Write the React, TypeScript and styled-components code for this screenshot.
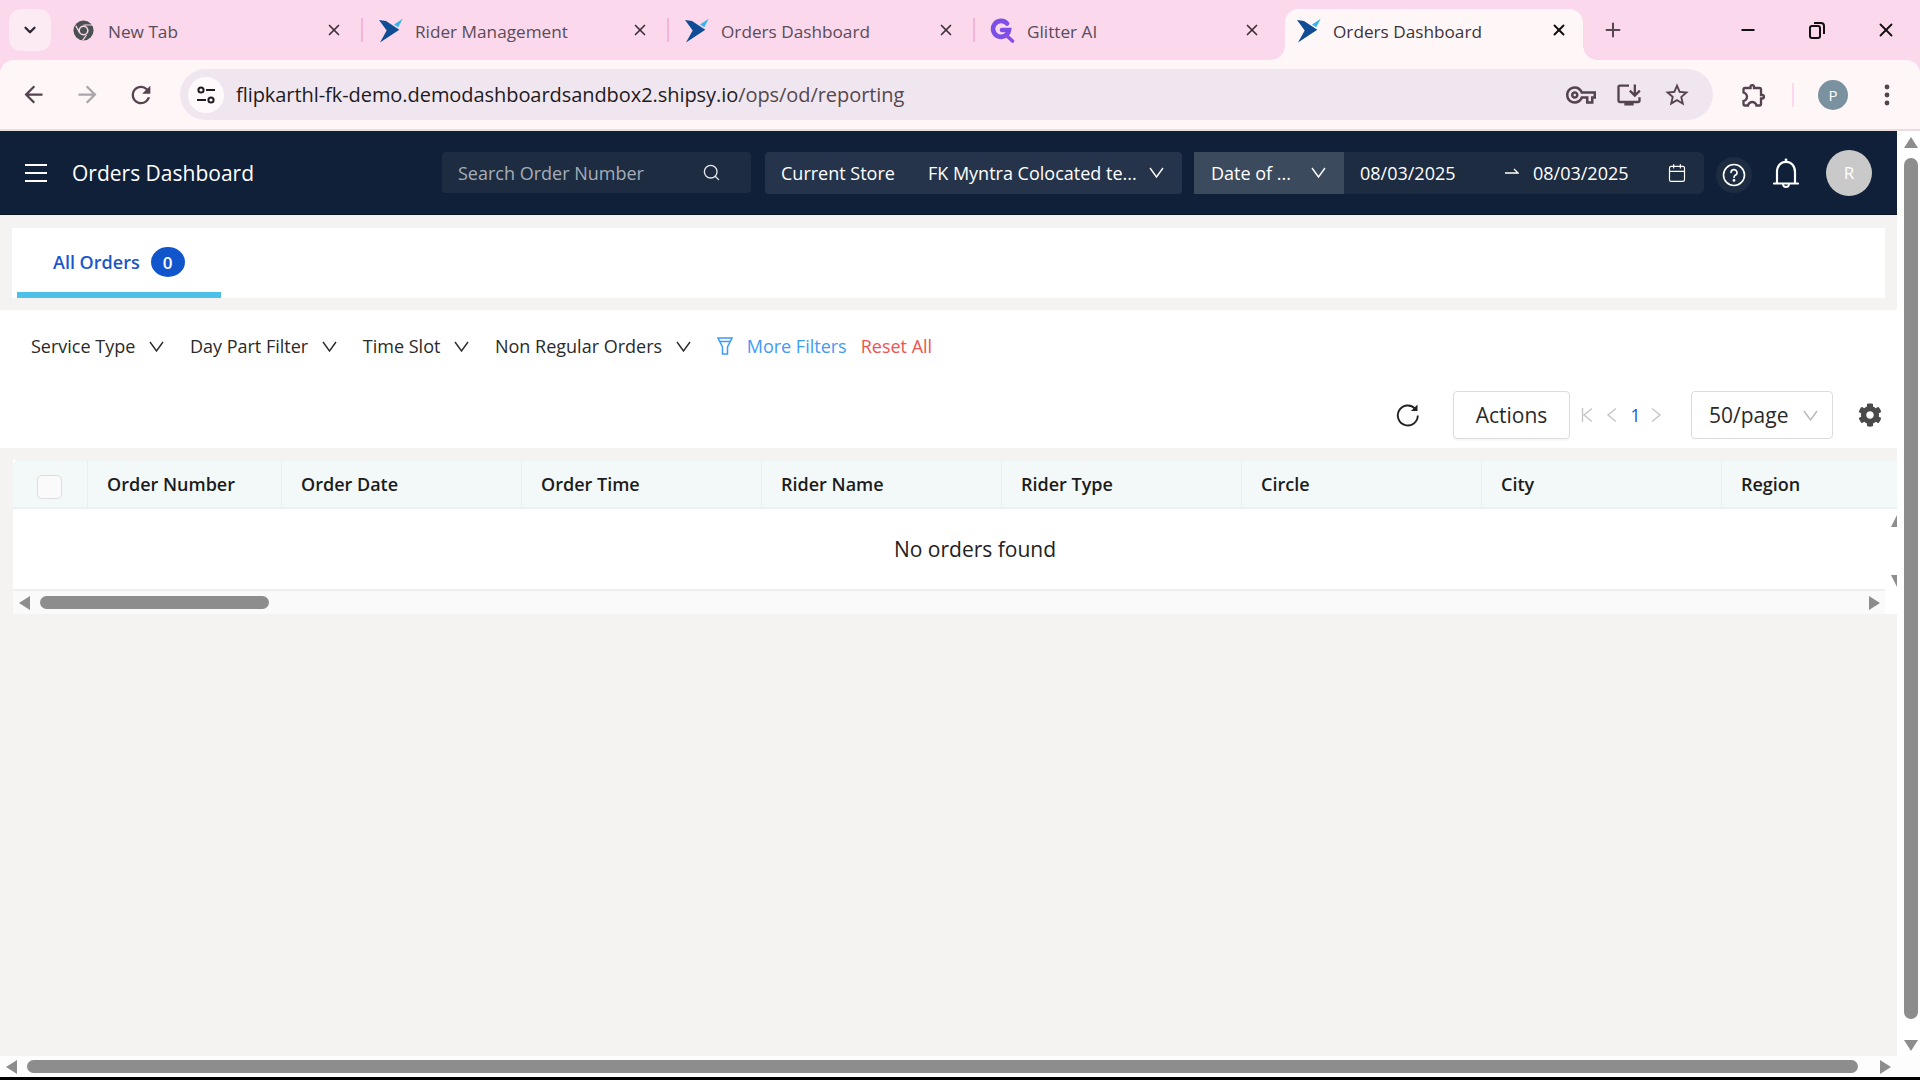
import React from "react";
import styled, { createGlobalStyle } from "styled-components";
import { Minus, Plus, X, Search, ChevronDown, Calendar } from "lucide-react";
import { FaCog } from "react-icons/fa";
import {
  MdArrowBack, MdArrowForward, MdRefresh, MdOutlineVpnKey, MdOutlineInstallDesktop, MdStarBorder, MdOutlineExtension,
} from "react-icons/md";

const Global = createGlobalStyle`
  html, body { margin: 0; padding: 0; height: 100%; overflow: hidden; background: #f4f3f1; }
  * { box-sizing: border-box; }
  body { font-family: "Open Sans", "Noto Sans", sans-serif; }
`;

const Page = styled.div`
  width: 1920px; height: 1080px; display: flex; flex-direction: column; overflow: hidden; background: #fbd8eb;
`;

/* Chrome tab strip */
const TabStrip = styled.div`
  height: 60px; background: #fbd8eb; display: flex; align-items: flex-end; padding-left: 9px; flex: none;
`;
const TabMenu = styled.div`
  width: 42px; height: 42px; margin-bottom: 9px; border-radius: 12px; background: #fdebf4; color: #2b2430;
  display: flex; align-items: center; justify-content: center; flex: none; margin-right: 6px;
`;
const Tab = styled.div<{ $active?: boolean; $sep?: boolean }>`
  width: ${(p) => (p.$active ? "298px" : "306px")};
  height: 51px;
  margin-left: ${(p) => (p.$active ? "4px" : "0")};
  padding: 0 ${(p) => (p.$active ? "9px" : "14px")} 9px ${(p) => (p.$active ? "11px" : "15px")};
  background: ${(p) => (p.$active ? "#fff7f7" : "transparent")};
  border-radius: ${(p) => (p.$active ? "14px 14px 0 0" : "0")};
  display: flex; align-items: center; gap: 12px; flex: none; position: relative;
  font-size: 17.2px; color: ${(p) => (p.$active ? "#3d3340" : "#5a4c58")};
  &::after {
    content: ""; display: ${(p) => (p.$sep ? "block" : "none")};
    position: absolute; right: 0; top: 9px; width: 2px; height: 24px; background: #f5b5d8;
  }
`;
const FirstTab = styled(Tab)`
  padding-left: 16px;
`;
const ActiveTabFlare = styled.span<{ $side: "left" | "right" }>`
  position: absolute; bottom: 0; width: 14px; height: 14px;
  ${(p) => (p.$side === "left" ? "left: -14px;" : "right: -14px;")}
  background: radial-gradient(circle at ${(p) => (p.$side === "left" ? "0 0" : "100% 0")}, transparent 13.5px, #fff7f7 14px);
`;
const Favicon = styled.svg`
  width: 25px; height: 25px; flex: none;
`;
const ChromeFavicon = styled.svg`
  width: 21px; height: 21px; flex: none; margin-right: 2px;
`;
const TabTitle = styled.span`
  flex: 1; white-space: nowrap; overflow: hidden; padding-top: 2px;
`;
const TabClose = styled.span`
  width: 22px; display: flex; justify-content: center; margin-right: 4px; color: #3b3038;
`;
const NewTab = styled.div`
  width: 30px; height: 42px; margin: 0 0 9px 15px; display: flex; align-items: center; justify-content: center; color: #55464f;
`;
const WindowControls = styled.div`
  margin-left: auto; height: 60px; display: flex; align-items: center; color: #111;
`;
const WindowButton = styled.div`
  width: 69px; display: flex; justify-content: center;
`;

/* Chrome toolbar */
const Toolbar = styled.div`
  height: 71px; flex: none; background: #fff7f7; border-bottom: 2px solid #e9dfe0; border-radius: 14px 14px 0 0;
  display: flex; align-items: center; color: #55434f;
`;
const NavIcon = styled.div<{ $dim?: boolean }>`
  width: 54px; display: flex; justify-content: center; color: ${(p) => (p.$dim ? "#aca4a8" : "#55434f")}; flex: none;
`;
const NavGroup = styled.div`
  display: flex; padding-left: 6px; margin-right: 12px;
`;
const Omnibox = styled.div`
  width: 1533px; height: 51px; border-radius: 26px; background: #f0e6f0; display: flex; align-items: center;
  padding: 0 12px 0 8px; flex: none;
`;
const SiteChip = styled.div`
  width: 36px; height: 36px; border-radius: 50%; background: #fff9fb; display: flex; align-items: center; justify-content: center; flex: none;
`;
const Url = styled.div`
  margin-left: 12px; font-size: 20px; color: #1f1a20; white-space: nowrap; letter-spacing: -0.06px;
`;
const UrlPath = styled.span`
  color: #55484f;
`;
const OmniIcons = styled.div`
  margin-left: auto; display: flex; color: #55434f; align-items: center;
`;
const OmniSlot = styled.div`
  width: 48px; display: flex; justify-content: center;
`;
const ToolRight = styled.div`
  display: flex; align-items: center; color: #55434f; flex: 1; padding-left: 27px;
`;
const ToolDivider = styled.div`
  width: 2px; height: 24px; background: #fbd8eb; margin: 0 24px;
`;
const ProfileDot = styled.div`
  width: 30px; height: 30px; border-radius: 50%; background: #7a919f; color: #fff; font-size: 15px;
  display: flex; align-items: center; justify-content: center; flex: none;
`;
const MoreDots = styled.svg`
  width: 6px; height: 22px; margin-left: 36px; flex: none;
`;

/* Viewport */
const Viewport = styled.div`
  flex: 1; display: flex; min-height: 0;
`;
const Content = styled.div`
  flex: 1; min-width: 0; background: #f4f3f1; display: flex; flex-direction: column;
`;
const VScroll = styled.div`
  width: 23px; flex: none; background: #fff; display: flex; flex-direction: column; align-items: center; padding: 6px 1px 5px 5px;
`;
const VThumb = styled.div`
  width: 14px; flex: 1; margin: 10px 0 21px; border-radius: 7px; background: #8d8d8d;
`;
const ArrowUp = styled.div`
  width: 0; height: 0; border-left: 7.5px solid transparent; border-right: 7.5px solid transparent; border-bottom: 11px solid #8d8d8d; flex: none;
`;
const ArrowDown = styled.div`
  width: 0; height: 0; border-left: 7.5px solid transparent; border-right: 7.5px solid transparent; border-top: 11px solid #8d8d8d; flex: none;
`;
const ArrowL = styled.div`
  width: 0; height: 0; border-top: 7.5px solid transparent; border-bottom: 7.5px solid transparent; border-right: 11px solid #8d8d8d; flex: none;
`;
const ArrowR = styled.div`
  width: 0; height: 0; border-top: 7.5px solid transparent; border-bottom: 7.5px solid transparent; border-left: 11px solid #8d8d8d; flex: none;
`;
const HScroll = styled.div`
  height: 21px; flex: none; background: #fdfdfd; display: flex; align-items: center; padding: 0 29px 0 6px;
`;
const HThumb = styled.div`
  flex: 1; height: 13px; border-radius: 7px; background: #8d8d8d; margin: 0 22px 0 10px;
`;
const BottomEdge = styled.div`
  height: 3px; background: #000; flex: none;
`;

/* App header */
const AppHeader = styled.header`
  height: 84px; flex: none; background: #0f2038; color: #fff; display: flex; align-items: center; padding: 0 0 1px 25px;
  box-shadow: inset 0 -1px 0 #0a1320;
`;
const HeaderTitle = styled.div`
  font-size: 21px; margin-left: 25px; width: 370px; white-space: nowrap; flex: none;
`;
const SearchBox = styled.div`
  width: 309px; height: 41px; background: #1e2c42; border-radius: 4px; display: flex; align-items: center; padding: 0 30px 0 16px;
  color: #a6adb8; font-size: 18px; flex: none; justify-content: space-between;
`;
const StoreSelect = styled.div`
  width: 417px; height: 42px; margin-left: 14px; background: #25344a; border-radius: 4px; display: flex; align-items: center;
  padding: 0 18px 0 16px; font-size: 18px; flex: none; white-space: nowrap;
`;
const StoreValue = styled.span`
  margin-left: 33px; flex: 1;
`;
const DateType = styled.div`
  width: 150px; height: 42px; margin-left: 12px; background: #3c4a5d; display: flex; align-items: center; justify-content: space-between;
  padding: 0 18px 0 17px; font-size: 18px; flex: none; white-space: nowrap;
`;
const DateRange = styled.div`
  width: 360px; height: 42px; background: #1e2c42; border-radius: 0 6px 6px 0; display: flex; align-items: center; padding: 0 17px 0 16px;
  font-size: 18px; flex: none;
`;
const DateText = styled.span`
  width: 145px;
`;
const DateSecond = styled.span`
  flex: 1;
`;
const RangeArrow = styled.svg`
  width: 14px; height: 10px; margin: 0 14px 4px 0; flex: none;
`;
const HelpBubble = styled.div`
  width: 36px; height: 36px; margin: 5px 0 0 12px; border-radius: 50%; background: #1e2c42; display: flex; align-items: center; justify-content: center; flex: none;
`;
const BellWrap = styled.div`
  margin: 2px 0 0 17px; display: flex; flex: none; width: 34px; justify-content: center;
`;
const UserAvatar = styled.div`
  width: 46px; height: 46px; border-radius: 50%; background: #c9c9c9; margin-left: 23px; display: flex; align-items: center; justify-content: center;
  color: #fff; font-size: 17px; flex: none;
`;

/* Tabs card */
const TabsCard = styled.div`
  height: 70px; margin: 13px 12px 0 12px; background: #fff; display: flex; flex: none;
`;
const OrdersTab = styled.div`
  width: 204px; height: 70px; margin-left: 5px; border-bottom: 6px solid #4cc0e6; display: flex; align-items: center; padding: 4px 0 0 36px; gap: 11px;
  color: #1a56cc; font-size: 18px; font-weight: 600;
`;
const CountBadge = styled.span`
  width: 34px; height: 30px; border-radius: 50%; background: #1155cc; color: #fff; display: flex; align-items: center; justify-content: center; font-size: 17px; font-weight: 600;
`;

/* Filters card */
const FiltersCard = styled.div`
  height: 138px; margin-top: 12px; background: #fff; display: flex; flex-direction: column; padding-top: 18px; flex: none;
`;
const FilterRow = styled.div`
  height: 36px; display: flex; align-items: center; padding-left: 31px; font-size: 18px; color: #2a2a2a;
`;
const FilterItem = styled.div`
  display: flex; align-items: center; gap: 14px; margin-right: 25.6px; white-space: nowrap;
`;
const MoreFilters = styled.div`
  display: flex; align-items: center; gap: 14px; color: #3f9bf5; white-space: nowrap;
`;
const FunnelIcon = styled.svg`
  width: 16px; height: 18px; flex: none;
`;
const ResetAll = styled.div`
  color: #f05353; margin-left: 14px; white-space: nowrap;
`;
const ActionRow = styled.div`
  height: 48px; margin-top: 27px; display: flex; align-items: center; justify-content: flex-end; padding-right: 15px;
`;
const ActionsButton = styled.div`
  width: 117px; height: 48px; border: 1px solid #dcdcdc; border-radius: 4px; box-shadow: 0 2px 0 rgba(0,0,0,0.03); display: flex; align-items: center; justify-content: center;
  font-size: 21px; color: #2a2a2a; margin-left: 33px;
`;
const Pager = styled.div`
  display: flex; align-items: center; width: 121px; padding-left: 11px; flex: none; color: #c5c5c5;
`;
const PagerSlot = styled.svg`
  width: 12px; height: 16px; margin-right: 13px; flex: none;
`;
const PageNumber = styled.span`
  color: #1a56cc; font-size: 17.5px; width: 11px; margin: 0 9px 0 -1px; text-align: center;
`;
const PageSize = styled.div`
  width: 142px; height: 48px; border: 1px solid #dcdcdc; border-radius: 4px; display: flex; align-items: center; justify-content: space-between; padding: 0 14px 0 17px;
  font-size: 21px; color: #2a2a2a;
`;
const GearWrap = styled.div`
  margin-left: 25px; display: flex; color: #4a4a4a;
`;

/* Table */
const TableWrap = styled.div`
  margin: 12px 0 0 13px; background: #fff; display: flex; flex-direction: column; flex: none; position: relative;
`;
const HeadRow = styled.div`
  height: 49px; display: flex; background: #f3f8f8; border-bottom: 2px solid #ebf0f0; border-top: 1px solid #eef3f3; border-radius: 6px 0 0 0; overflow: hidden;
`;
const CheckCell = styled.div`
  width: 75px; flex: none; border-right: 1px solid #e9eeee; display: flex; align-items: center; justify-content: center;
`;
const CheckBox = styled.div`
  width: 25px; height: 24px; border: 1.5px solid #dcdcdc; border-radius: 5px; background: #fafafa; margin: 6px 1px 0 0;
`;
const HeadCell = styled.div<{ $w: number }>`
  width: ${(p) => p.$w}px; flex: none; padding-left: 19px; border-right: 1px solid #eaefef; display: flex; align-items: center;
  font-size: 18px; font-weight: 600; color: #1c1c1c; white-space: nowrap;
  &:last-child { border-right: 0; }
`;
const EmptyRow = styled.div`
  height: 82px; display: flex; align-items: center; justify-content: center; border-bottom: 2px solid #eeeeee; padding-left: 52px; margin-right: 12px;
  font-size: 21px; color: #222;
`;
const SmallArrowUp = styled.div`
  position: absolute; right: 0; top: 55px; width: 0; height: 0; border-left: 6px solid transparent; border-bottom: 12px solid #8d8d8d;
`;
const SmallArrowDown = styled.div`
  position: absolute; right: 0; top: 115px; width: 0; height: 0; border-left: 6px solid transparent; border-top: 12px solid #8d8d8d;
`;
const TableScroll = styled.div`
  height: 23px; background: #fafafa; margin-right: 12px; display: flex; align-items: center; padding: 0 5px 0 6px;
`;
const TableThumb = styled.div`
  width: 229px; height: 13px; border-radius: 7px; background: #8d8d8d; margin-left: 10px;
`;
const TableSpacer = styled.div`
  flex: 1;
`;

const ShipsyLogo = () => (
  <Favicon viewBox="0 0 25 25">
    <path d="M1 2 L8 3 L21.3 11.8 L2 24.5 L8.7 12.5 Z" fill="#0f4c96" />
    <path d="M16 6.5 L24.7 0.8 L20.3 9.3 Z" fill="#35b6ea" />
  </Favicon>
);

const ChromeLogo = () => (
  <ChromeFavicon viewBox="0 0 24 24">
    <circle cx="12" cy="12" r="11.5" fill="#4b5052" />
    <circle cx="12" cy="12" r="5.8" fill="#fbd8eb" />
    <circle cx="12" cy="12" r="4" fill="#4b5052" />
    <path d="M12 6.4 L22 6.4 L21.5 5 L12 5 Z" fill="#fbd8eb" />
    <path d="M7 14.8 L2.6 7 L3.6 6 L8 13.5 Z" fill="#fbd8eb" />
    <path d="M14.8 16.9 L10 23.5 L11.5 23.8 L16 17.5 Z" fill="#fbd8eb" />
  </ChromeFavicon>
);

const GlitterLogo = () => (
  <Favicon viewBox="-1 0 25 25">
    <path d="M16 5.5 A8 8 0 1 0 18 12 L11 12" fill="none" stroke="#7b4fe8" strokeWidth="4.6" strokeLinecap="round" />
    <path d="M16 18 L21.5 23" fill="none" stroke="#8a4de6" strokeWidth="3.6" strokeLinecap="round" />
  </Favicon>
);

const SiteInfo = () => (
  <svg width="22" height="22" viewBox="0 0 22 22" fill="none" stroke="#211c24" strokeWidth="2">
    <circle cx="6" cy="6" r="2.6" />
    <path d="M11 6 H20" />
    <circle cx="16" cy="16" r="2.6" />
    <path d="M2 16 H11" />
  </svg>
);

const RestoreIcon = () => (
  <svg width="18" height="18" viewBox="0 0 18 18" fill="none" stroke="#111" strokeWidth="2">
    <rect x="2" y="5" width="10" height="12" rx="2" />
    <path d="M6 2 H13 Q16 2 16 5 V13" />
  </svg>
);

const HamburgerIcon = () => (
  <svg width="22" height="18" viewBox="0 0 22 18" stroke="#fff" strokeWidth="2" style={{ flex: "none" }}>
    <path d="M0 1 H22 M0 9 H22 M0 17 H22" />
  </svg>
);

const HelpIcon = () => (
  <svg width="24" height="24" viewBox="0 0 24 24" fill="none" stroke="#fff" strokeWidth="1.6" strokeLinecap="round">
    <circle cx="12" cy="12" r="10.5" />
    <path d="M9 9.5 A3 3 0 1 1 13.3 12.3 C12.4 12.8 12 13.3 12 14.4" />
    <circle cx="12" cy="17.4" r="0.6" fill="#fff" />
  </svg>
);

const BellIcon = () => (
  <svg width="26" height="31" viewBox="0 0 26 31" fill="none" stroke="#fff" strokeWidth="2.2">
    <path d="M1 25.5 H25" strokeLinecap="round" />
    <path d="M4 25 V14 C4 7.5 8 3.8 13 3.8 C18 3.8 22 7.5 22 14 V25" />
    <circle cx="13" cy="2" r="1.4" fill="#fff" stroke="none" />
    <path d="M10 26 A3 3 0 0 0 16 26" strokeWidth="1.8" />
  </svg>
);

const RefreshIcon = () => (
  <svg width="24" height="24" viewBox="0 0 24 24" fill="none" stroke="#222" strokeWidth="1.9" style={{ flex: "none" }}>
    <path d="M19 5.5 A10 10 0 1 0 21.8 12.5" />
    <path d="M21.5 1.5 L21.5 8 L15 8 Z" fill="#222" stroke="none" />
  </svg>
);

const VChevron = ({ color = "currentColor" }: { color?: string }) => (
  <svg width="15" height="11" viewBox="0 0 15 11" fill="none" stroke={color} strokeWidth="1.4" style={{ flex: "none" }}>
    <path d="M1 1 L7.5 10 L14 1" />
  </svg>
);

const tabs = ["Rider Management", "Orders Dashboard"];

const columns: [string, number][] = [
  ["Order Number", 194], ["Order Date", 240], ["Order Time", 240], ["Rider Name", 240],
  ["Rider Type", 240], ["Circle", 240], ["City", 240], ["Region", 175],
];

export default function App() {
  return (
    <Page>
      <Global />
      <TabStrip>
        <TabMenu><ChevronDown size={18} strokeWidth={3} /></TabMenu>
        <FirstTab $sep>
          <ChromeLogo />
          <TabTitle>New Tab</TabTitle>
          <TabClose><X size={18} strokeWidth={2.2} /></TabClose>
        </FirstTab>
        {tabs.map((t) => (
          <Tab $sep key={t}>
            <ShipsyLogo />
            <TabTitle>{t}</TabTitle>
            <TabClose><X size={18} strokeWidth={2.2} /></TabClose>
          </Tab>
        ))}
        <Tab>
          <GlitterLogo />
          <TabTitle>Glitter AI</TabTitle>
          <TabClose><X size={18} strokeWidth={2.2} /></TabClose>
        </Tab>
        <Tab $active>
          <ActiveTabFlare $side="left" />
          <ShipsyLogo />
          <TabTitle>Orders Dashboard</TabTitle>
          <TabClose><X size={18} strokeWidth={2.6} color="#111" /></TabClose>
          <ActiveTabFlare $side="right" />
        </Tab>
        <NewTab><Plus size={22} strokeWidth={2.2} /></NewTab>
        <WindowControls>
          <WindowButton><Minus size={20} strokeWidth={2.2} /></WindowButton>
          <WindowButton><RestoreIcon /></WindowButton>
          <WindowButton><X size={22} strokeWidth={2} /></WindowButton>
        </WindowControls>
      </TabStrip>

      <Toolbar>
        <NavGroup>
          <NavIcon><MdArrowBack size={27} /></NavIcon>
          <NavIcon $dim><MdArrowForward size={27} /></NavIcon>
          <NavIcon><MdRefresh size={28} /></NavIcon>
        </NavGroup>
        <Omnibox>
          <SiteChip><SiteInfo /></SiteChip>
          <Url>flipkarthl-fk-demo.demodashboardsandbox2.shipsy.io<UrlPath>/ops/od/reporting</UrlPath></Url>
          <OmniIcons>
            <OmniSlot><MdOutlineVpnKey size={30} /></OmniSlot>
            <OmniSlot><MdOutlineInstallDesktop size={28} /></OmniSlot>
            <OmniSlot><MdStarBorder size={28} /></OmniSlot>
          </OmniIcons>
        </Omnibox>
        <ToolRight>
          <MdOutlineExtension size={28} />
          <ToolDivider />
          <ProfileDot>P</ProfileDot>
          <MoreDots viewBox="0 0 6 22" fill="currentColor">
            <circle cx="3" cy="3" r="2.4" />
            <circle cx="3" cy="11" r="2.4" />
            <circle cx="3" cy="19" r="2.4" />
          </MoreDots>
        </ToolRight>
      </Toolbar>

      <Viewport>
        <Content>
          <AppHeader>
            <HamburgerIcon />
            <HeaderTitle>Orders Dashboard</HeaderTitle>
            <SearchBox>Search Order Number<Search size={19} strokeWidth={1.7} color="#e6e8eb" /></SearchBox>
            <StoreSelect>
              Current Store
              <StoreValue>FK Myntra Colocated te...</StoreValue>
              <VChevron />
            </StoreSelect>
            <DateType>Date of ...<VChevron /></DateType>
            <DateRange>
              <DateText>08/03/2025</DateText>
              <RangeArrow viewBox="0 0 14 10" fill="none" stroke="#fff" strokeWidth="1.3"><path d="M0 7 H13 L9 3" /></RangeArrow>
              <DateSecond>08/03/2025</DateSecond>
              <Calendar size={20} strokeWidth={1.4} />
            </DateRange>
            <HelpBubble><HelpIcon /></HelpBubble>
            <BellWrap><BellIcon /></BellWrap>
            <UserAvatar>R</UserAvatar>
          </AppHeader>

          <TabsCard>
            <OrdersTab>All Orders<CountBadge>0</CountBadge></OrdersTab>
          </TabsCard>

          <FiltersCard>
            <FilterRow>
              <FilterItem>Service Type<VChevron color="#2a2a2a" /></FilterItem>
              <FilterItem>Day Part Filter<VChevron color="#2a2a2a" /></FilterItem>
              <FilterItem>Time Slot<VChevron color="#2a2a2a" /></FilterItem>
              <FilterItem>Non Regular Orders<VChevron color="#2a2a2a" /></FilterItem>
              <MoreFilters>
                <FunnelIcon viewBox="0 0 16 18" fill="none" stroke="currentColor" strokeWidth="1.5">
                  <path d="M1 1 H15 L10.5 10 V17 H5.5 V10 Z" />
                  <path d="M3 4.5 H13" />
                </FunnelIcon>
                More Filters
              </MoreFilters>
              <ResetAll>Reset All</ResetAll>
            </FilterRow>
            <ActionRow>
              <RefreshIcon />
              <ActionsButton>Actions</ActionsButton>
              <Pager>
                <PagerSlot viewBox="0 0 12 16" fill="none" stroke="currentColor" strokeWidth="1.4">
                  <path d="M1.5 1 V15 M11 1.5 L3 8 L11 14.5" />
                </PagerSlot>
                <PagerSlot viewBox="0 0 12 16" fill="none" stroke="currentColor" strokeWidth="1.4">
                  <path d="M10 1.5 L2 8 L10 14.5" />
                </PagerSlot>
                <PageNumber>1</PageNumber>
                <PagerSlot viewBox="0 0 12 16" fill="none" stroke="currentColor" strokeWidth="1.4">
                  <path d="M2 1.5 L10 8 L2 14.5" />
                </PagerSlot>
              </Pager>
              <PageSize>50/page<VChevron color="#b8b8b8" /></PageSize>
              <GearWrap><FaCog size={24} /></GearWrap>
            </ActionRow>
          </FiltersCard>

          <TableWrap>
            <HeadRow>
              <CheckCell><CheckBox /></CheckCell>
              {columns.map(([name, w]) => <HeadCell key={name} $w={w}>{name}</HeadCell>)}
            </HeadRow>
            <EmptyRow>No orders found</EmptyRow>
            <SmallArrowUp />
            <SmallArrowDown />
            <TableScroll>
              <ArrowL />
              <TableThumb />
              <TableSpacer />
              <ArrowR />
            </TableScroll>
          </TableWrap>
        </Content>
        <VScroll>
          <ArrowUp />
          <VThumb />
          <ArrowDown />
        </VScroll>
      </Viewport>

      <HScroll>
        <ArrowL />
        <HThumb />
        <ArrowR />
      </HScroll>
      <BottomEdge />
    </Page>
  );
}
